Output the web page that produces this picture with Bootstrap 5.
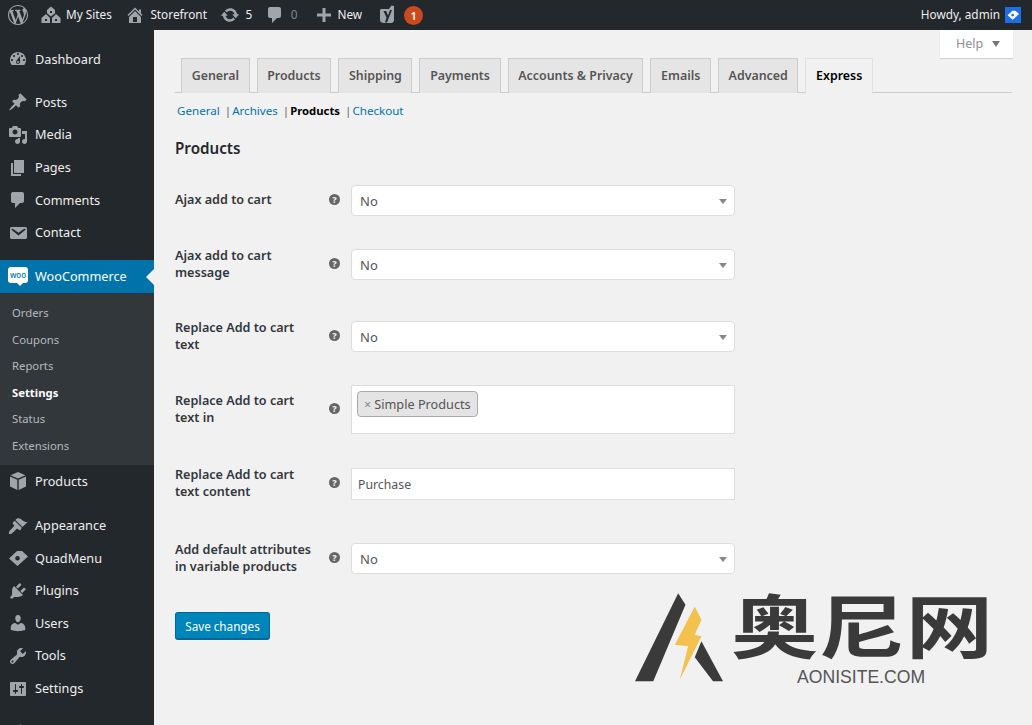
<!DOCTYPE html>
<html lang="en"><head><meta charset="utf-8"><title>Settings</title>
<link href="https://cdn.jsdelivr.net/npm/bootstrap@5.3.0/dist/css/bootstrap.min.css" rel="stylesheet">
<style>
html,body{height:725px;overflow:hidden;background:#f1f1f1}
body{font-family:"Noto Sans","Open Sans",sans-serif;font-size:13px;color:#444;position:relative}
svg{fill:currentColor;flex:none;display:block}
.wp-top{height:30px;background:#23282d;color:#eee;padding-left:8px;padding-right:11px;font-size:11.8px;white-space:nowrap}
.wp-top svg{color:#a0a5aa}
.top-it{margin-right:13px;gap:5.500px}
.t-site{gap:5px}
.t-cm{margin-right:17px}
.t-new{gap:3px;margin-right:15px}
.zero{color:#82878c}
.yo-badge{width:19px;height:19px;border-radius:50%;background:#ca4a1f;color:#fff;font-size:11px;font-weight:600;line-height:19px;text-align:center;margin-left:1.500px}
.ava{width:16px;height:16px;background:#1c6fe6;margin-left:5px;color:#fff}
.ava svg{color:#fff}
.wp-shell{height:695px}
.wp-side{width:154px;flex:none;background:#23282d;padding-top:13px;color:#eee;font-size:12.700px;overflow:hidden}
.side-it{height:32.600px;padding-left:8px;gap:7px;position:relative}
.side-it svg{color:#a0a5aa}
.sp{margin-top:10.500px}
.sp2{margin-top:11.500px}
.sp3{margin-top:11px}
.side-on{background:#0073aa;color:#fff}
.side-on::after{content:"";position:absolute;right:0;top:9px;border:8px solid transparent;border-right-color:#f1f1f1;border-left:0}
.wsub{background:#32373c;padding:7.500px 0 6px 12px;font-size:11.300px;color:#b4b9be}
.wsub div{height:26.500px;line-height:26.500px}
.wsub .cur{color:#fff;font-weight:700}
.woo-ico{width:20px;height:16px;background:#fff;border-radius:3px;color:#0073aa;font-size:8px;font-weight:500;line-height:15px;text-align:center;position:relative;margin-bottom:2px}
.woo-ico::after{content:"";position:absolute;left:9px;bottom:-3px;border:3px solid transparent;border-top-color:#fff;border-bottom:0}
.side-dot{width:14px;height:14px;border-radius:50%;background:#ca4a1f;margin-left:38px}
.wp-main{flex:1;position:relative;padding:28px 20px 0 21px;min-width:0}
.help-tab{position:absolute;top:0;right:19px;width:73px;height:28px;background:#fff;box-shadow:0 1px 1px rgba(0,0,0,.12);color:#8a9096;gap:9px;font-size:12.500px;padding-left:16px}
.help-tab i{border:4.500px solid transparent;border-top:6px solid #72777c;border-bottom:0;display:block}
.tab-line{border-bottom:1px solid #ccc;padding-left:6px;gap:7px;height:35px;margin-bottom:0!important;flex-wrap:nowrap}
.tab-line .nav-link{height:35px;padding:0 9.650px;border:1px solid #ccc;border-bottom:0;border-radius:0;background:#e5e5e5;color:#555;font-size:12.400px;font-weight:600;line-height:34px;margin:0;white-space:nowrap}
.tab-line .nav-link.active{background:#f1f1f1;color:#000;height:36px;margin-bottom:-1px}
.sub-line{font-size:11.600px;color:#666;margin:8.500px 0 0 2px;height:18.500px;line-height:17px;white-space:nowrap}
.sub-line a{color:#0073aa;text-decoration:none}
.sub-line b{color:#000;font-weight:700;font-size:11.300px}
.sub-line i{font-style:normal;margin:0 1px 0 5px}
.set-ttl{font-size:15.200px;font-weight:600;color:#23282d;margin:17px 0 26px;line-height:22px}
.fr{display:flex;align-items:center}
.fl{width:154px;flex:none;font-size:12.600px;font-weight:600;color:#32373c;line-height:17px;margin-top:-1px;margin-bottom:1px}
.qm{width:11px;height:11px;border-radius:50%;background:#666;color:#f1f1f1;font-size:9px;font-weight:800;line-height:11px;text-align:center;flex:none;margin:-3px 11px 0 0}
.fw{width:384px;flex:none}
.wp-sel{height:31px;border:1px solid #ddd;border-radius:4px;background-color:#fff;background-image:none;color:#555;font-size:13px;padding:1px 8px;position:relative;line-height:29px;box-shadow:none;appearance:none}
.sel-wrap{position:relative}
.sel-wrap::after{content:"";position:absolute;right:8px;top:14px;border:4px solid transparent;border-top:5px solid #888;border-bottom:0}
.multi{height:49px;border:1px solid #ddd;background:#fff;padding:5px 5px}
.chip{display:inline-block;height:26px;line-height:24px;background:#e4e4e4;border:1px solid #aaa;border-radius:4px;padding:0 6px;color:#555;font-size:12.700px}
.chip span{color:#888;margin-right:3px}
.txt{height:32px;border:1px solid #ddd;border-radius:0;background:#fff;color:#555;font-size:12.300px;padding:0 6px;box-shadow:none}
.m1{margin-bottom:31.500px}.m2{margin-bottom:38px}.m3{margin-bottom:31.500px}.m4{margin-bottom:33px}.m5{margin-bottom:40.500px}.m6{margin-bottom:36.500px}
.save{background:#0085ba;border:1px solid #006799;border-bottom-width:2px;color:#fff;font-size:11.700px;height:28px;width:95px;padding:0;border-radius:3px;line-height:26px}
.save:hover{background:#0085ba;color:#fff}
.mark-wm{position:absolute;left:635px;top:593px;display:flex;color:#3a3a3a;pointer-events:none}
.cn{font-family:"Noto Sans CJK SC",sans-serif;font-weight:700;font-size:84px;line-height:82px;height:67px;width:253px;white-space:nowrap;transform:scale(1.04,.82);transform-origin:0 0;margin-top:-3px}
.en{font-family:"Liberation Sans",sans-serif;font-size:17.600px;color:#555;line-height:18px;margin:11px 0 0 66px;white-space:nowrap}
</style></head>
<body>
<svg width="0" height="0" class="position-absolute">
<symbol id="i-wp" viewBox="0 0 20 20"><path d="M20 10c0-5.510-4.490-10-10-10C4.480 0 0 4.490 0 10c0 5.520 4.480 10 10 10 5.510 0 10-4.480 10-10zM7.780 15.370L4.370 6.220c.55-.02 1.170-.08 1.170-.08.5-.06.44-1.130-.06-1.110 0 0-1.450.11-2.370.11-.18 0-.37 0-.58-.01C4.120 2.690 6.870 1.110 10 1.110c2.330 0 4.450.87 6.050 2.340-.68-.11-1.650.39-1.650 1.580 0 .74.45 1.360.9 2.100.35.61.55 1.360.55 2.460 0 1.490-1.400 5-1.400 5l-3.030-8.370c.54-.02.82-.17.82-.17.5-.05.44-1.250-.06-1.220 0 0-1.440.12-2.380.12-.87 0-2.330-.12-2.330-.12-.5-.03-.56 1.200-.06 1.220l.92.08 1.260 3.410zM17.410 10c.24-.64.74-1.870.43-4.250.7 1.290 1.050 2.710 1.050 4.250 0 3.290-1.730 6.240-4.400 7.780.97-2.590 1.940-5.200 2.920-7.780zM6.100 18.090C3.120 16.650 1.110 13.530 1.110 10c0-1.300.23-2.480.72-3.590C3.250 10.300 4.670 14.200 6.100 18.090zm4.030-6.630l2.580 6.980c-.86.29-1.760.45-2.710.45-.79 0-1.570-.11-2.290-.33.81-2.380 1.620-4.740 2.420-7.100z"/></symbol>
<symbol id="i-sites" viewBox="0 0 20 20"><path d="M10 1.500L6 5v3.200l4 3.300 4-3.300V5zM9 6h2v2H9zM5 9L.5 13v5H9v-5zM4 14h2v2H4zM15 9l-4 4v5h8.500v-5zM14 14h2v2h-2z"/></symbol>
<symbol id="i-home" viewBox="0 0 20 20"><path d="M16 8.500l1.530 1.530-1.060 1.060L10 4.620l-6.470 6.470-1.060-1.060L10 2.500l4 4v-2h2v4zm-6-2.460l6 5.990V18H4v-5.970zM12 17v-5H8v5h4z"/></symbol>
<symbol id="i-upd" viewBox="0 0 20 20"><path d="M10.200 3.280c3.530 0 6.430 2.610 6.920 6h2.080l-3.500 4-3.500-4h2.320c-.45-1.970-2.210-3.450-4.320-3.450-1.450 0-2.730.71-3.540 1.780L4.950 5.660C6.230 4.200 8.110 3.280 10.200 3.280zm-.4 13.440c-3.520 0-6.430-2.610-6.920-6H.8l3.500-4c1.170 1.330 2.330 2.670 3.500 4H5.480c.45 1.970 2.210 3.450 4.320 3.450 1.450 0 2.730-.71 3.540-1.780l1.710 1.950c-1.280 1.460-3.150 2.380-5.250 2.380z"/></symbol>
<symbol id="i-cmt" viewBox="0 0 20 20"><path d="M5 2h9c1.100 0 2 .9 2 2v7c0 1.100-.9 2-2 2h-2l-5 5v-5H5c-1.100 0-2-.9-2-2V4c0-1.100.9-2 2-2z"/></symbol>
<symbol id="i-plus" viewBox="0 0 20 20"><path d="M17 8.500v3h-5.500V17h-3v-5.500H3v-3h5.500V3h3v5.500H17z"/></symbol>
<symbol id="i-yoast" viewBox="0 0 20 20"><path d="M4 4h8l2.500-3.500L17 1v14c0 1.500-1 3-3 3H7c-2 0-4-1-4-3V6c0-1 .4-2 1-2zM6.500 6l3 6.500-1.500 5 2 0 5-12.500-2 0-2 5.500-1.800-4.500z"/></symbol>
<symbol id="i-dash" viewBox="0 0 20 20"><path d="M3.760 16h12.480c1.100-1.370 1.760-3.110 1.760-5 0-4.420-3.580-8-8-8s-8 3.580-8 8c0 1.890.66 3.630 1.760 5zM10 4c.55 0 1 .45 1 1s-.45 1-1 1-1-.45-1-1 .45-1 1-1zM6 6c.55 0 1 .45 1 1s-.45 1-1 1-1-.45-1-1 .45-1 1-1zm8 0c.55 0 1 .45 1 1s-.45 1-1 1-1-.45-1-1 .45-1 1-1zm-5.370 5.550L12 7v6c0 1.100-.9 2-2 2s-2-.9-2-2c0-.57.24-1.080.63-1.450zM4 10c.55 0 1 .45 1 1s-.45 1-1 1-1-.45-1-1 .45-1 1-1zm12 0c.55 0 1 .45 1 1s-.45 1-1 1-1-.45-1-1 .45-1 1-1zm-5 3c0-.55-.45-1-1-1s-1 .45-1 1 .45 1 1 1 1-.45 1-1z"/></symbol>
<symbol id="i-post" viewBox="0 0 20 20"><path d="M10.440 3.020l1.820-1.820 6.360 6.350-1.830 1.820c-1.050-.68-2.480-.57-3.410.36l-.75.75c-.92.93-1.040 2.350-.35 3.410l-1.830 1.820-2.410-2.410-2.800 2.790c-.42.42-3.380 2.710-3.800 2.290s1.860-3.390 2.280-3.810l2.790-2.790L4.100 9.360l1.830-1.820c1.050.69 2.480.57 3.400-.36l.75-.75c.93-.92 1.050-2.350.36-3.410z"/></symbol>
<symbol id="i-media" viewBox="0 0 20 20"><path d="M13 11V4c0-.55-.45-1-1-1h-1.670L9 1H5L3.670 3H2c-.55 0-1 .45-1 1v7c0 .55.45 1 1 1h10c.55 0 1-.45 1-1zM7 4.500c1.380 0 2.500 1.120 2.500 2.500S8.380 9.500 7 9.500 4.500 8.380 4.500 7 5.620 4.500 7 4.500zM14 6h5v10.500c0 1.380-1.120 2.500-2.500 2.500S14 17.880 14 16.500s1.120-2.500 2.500-2.500c.17 0 .34.02.5.05V9h-3V6zm-4 8.050V13h2v3.500c0 1.380-1.120 2.500-2.500 2.500S7 17.880 7 16.500 8.120 14 9.500 14c.17 0 .34.02.5.05z"/></symbol>
<symbol id="i-page" viewBox="0 0 20 20"><path d="M6 15V2h10v13H6zm-1 1h8v2H3V5h2v11z"/></symbol>
<symbol id="i-mail" viewBox="0 0 20 20"><path d="M3.870 4h13.250C18.370 4 19 4.590 19 5.790v8.420c0 1.190-.63 1.790-1.880 1.790H3.870c-1.250 0-1.880-.6-1.880-1.790V5.790c0-1.200.63-1.790 1.880-1.790zm6.620 8.600l6.740-5.530c.24-.2.43-.66.13-1.070-.29-.41-.82-.42-1.170-.17l-5.700 3.860L4.800 5.830c-.35-.25-.88-.24-1.170.17-.3.41-.11.87.13 1.070z"/></symbol>
<symbol id="i-box" viewBox="0 0 20 20"><path d="M10 1l7.500 3.200L10 7.500 2.500 4.200zM2 5.500l7.300 3.200V19L2 15.500zM18 5.500v10L10.700 19V8.700z"/></symbol>
<symbol id="i-brush" viewBox="0 0 20 20"><path d="M14.480 11.060L7.410 3.990l1.500-1.500c.5-.56 2.300-.47 3.510.32 1.210.8 1.430 1.280 2.910 2.100 1.180.64 2.450 1.260 4.450.85zm-.71.71L6.700 4.700 4.930 6.470c-.39.39-.39 1.020 0 1.410l1.060 1.060c.39.39.39 1.030 0 1.420-.6.6-4.200 4.300-4.700 5.200-.5.900-.6 1.900-.2 2.300s1.400.3 2.300-.2c.9-.5 4.600-4.100 5.200-4.700.39-.39 1.030-.39 1.420 0l1.060 1.060c.39.39 1.020.39 1.410 0z"/></symbol>
<symbol id="i-quad" viewBox="0 0 20 20"><path d="M9 3l5 0 6 5.500L9.500 18 1 10.500zM9.500 8a2.300 2.300 0 1 0 .01 0z" fill-rule="evenodd"/></symbol>
<symbol id="i-plug" viewBox="0 0 20 20"><path d="M13.110 4.360L9.870 7.600 8 5.730l3.240-3.240c.35-.34 1.050-.2 1.560.32.52.51.66 1.210.31 1.550zm-8 1.770l.91-1.120 9.010 9.010-1.190.84c-.71.71-2.630 1.160-3.820 1.160H6.140L4.900 17.260c-.59.59-1.540.59-2.120 0-.59-.58-.59-1.530 0-2.120l1.240-1.240v-3.880c0-1.130.4-3.190 1.090-3.890zm7.260 3.970l3.240-3.240c.34-.35 1.040-.21 1.550.31.52.51.66 1.210.31 1.550l-3.240 3.250z"/></symbol>
<symbol id="i-user" viewBox="0 0 20 20"><path d="M10 9.250c-2.270 0-2.730-3.440-2.730-3.440C7 4.020 7.820 2 9.970 2c2.160 0 2.980 2.020 2.710 3.810 0 0-.41 3.440-2.680 3.440zm0 2.570L12.720 10c2.390 0 4.520 2.330 4.520 4.530v2.490s-3.650 1.130-7.240 1.130c-3.650 0-7.240-1.130-7.240-1.130v-2.490c0-2.250 1.940-4.480 4.470-4.480z"/></symbol>
<symbol id="i-tool" viewBox="0 0 20 20"><path d="M16.680 9.770c-1.340 1.340-3.300 1.670-4.950.99l-5.410 6.520c-.99.99-2.590.99-3.580 0s-.99-2.590 0-3.570l6.520-5.420c-.68-1.650-.35-3.610.99-4.950 1.280-1.280 3.120-1.620 4.720-1.060l-2.890 2.890 2.820 2.820 2.860-2.870c.53 1.580.18 3.390-1.080 4.650zM3.810 16.210c.4.39 1.040.39 1.430 0 .4-.4.4-1.040 0-1.430-.39-.4-1.030-.4-1.430 0-.39.39-.39 1.030 0 1.430z"/></symbol>
<symbol id="i-set" viewBox="0 0 20 20"><path d="M18 16V4c0-.55-.45-1-1-1H3c-.55 0-1 .45-1 1v12c0 .55.45 1 1 1h14c.55 0 1-.45 1-1zM8 11h1c.55 0 1 .45 1 1s-.45 1-1 1H8v1.500c0 .28-.22.5-.5.5s-.5-.22-.5-.5V13H6c-.55 0-1-.45-1-1s.45-1 1-1h1V5.500c0-.28.22-.5.5-.5s.5.22.5.5V11zm5-2h-1c-.55 0-1-.45-1-1s.45-1 1-1h1V5.500c0-.28.22-.5.5-.5s.5.22.5.5V7h1c.55 0 1 .45 1 1s-.45 1-1 1h-1v5.500c0 .28-.22.5-.5.5s-.5-.22-.5-.5V9z"/></symbol>
</svg>

<header class="wp-top d-flex align-items-center">
  <div class="top-it d-flex align-items-center"><svg width="20" height="20"><use href="#i-wp"/></svg></div>
  <div class="top-it t-site d-flex align-items-center"><svg width="20" height="20"><use href="#i-sites"/></svg><span>My Sites</span></div>
  <div class="top-it d-flex align-items-center"><svg width="20" height="20"><use href="#i-home"/></svg><span>Storefront</span></div>
  <div class="top-it d-flex align-items-center"><svg width="20" height="20"><use href="#i-upd"/></svg><span>5</span></div>
  <div class="top-it t-cm d-flex align-items-center"><svg width="20" height="20"><use href="#i-cmt"/></svg><span class="zero">0</span></div>
  <div class="top-it t-new d-flex align-items-center"><svg width="20" height="20"><use href="#i-plus"/></svg><span>New</span></div>
  <div class="top-it d-flex align-items-center"><svg width="20" height="20"><use href="#i-yoast"/></svg><div class="yo-badge">1</div></div>
  <div class="ms-auto d-flex align-items-center"><span>Howdy, admin</span><div class="ava d-flex align-items-center justify-content-center"><svg width="12" height="12"><use href="#i-quad"/></svg></div></div>
</header>

<div class="wp-shell d-flex">
  <nav class="wp-side">
    <div class="side-it d-flex align-items-center"><svg width="20" height="20"><use href="#i-dash"/></svg>Dashboard</div>
    <div class="side-it sp d-flex align-items-center"><svg width="20" height="20"><use href="#i-post"/></svg>Posts</div>
    <div class="side-it d-flex align-items-center"><svg width="20" height="20"><use href="#i-media"/></svg>Media</div>
    <div class="side-it d-flex align-items-center"><svg width="20" height="20"><use href="#i-page"/></svg>Pages</div>
    <div class="side-it d-flex align-items-center"><svg width="20" height="20"><use href="#i-cmt"/></svg>Comments</div>
    <div class="side-it d-flex align-items-center"><svg width="20" height="20"><use href="#i-mail"/></svg>Contact</div>
    <div class="side-it side-on sp3 d-flex align-items-center"><div class="woo-ico">woo</div>WooCommerce</div>
    <div class="wsub"><div>Orders</div><div>Coupons</div><div>Reports</div><div class="cur">Settings</div><div>Status</div><div>Extensions</div></div>
    <div class="side-it d-flex align-items-center"><svg width="20" height="20"><use href="#i-box"/></svg>Products</div>
    <div class="side-it sp2 d-flex align-items-center"><svg width="20" height="20"><use href="#i-brush"/></svg>Appearance</div>
    <div class="side-it d-flex align-items-center"><svg width="20" height="20"><use href="#i-quad"/></svg>QuadMenu</div>
    <div class="side-it d-flex align-items-center"><svg width="20" height="20"><use href="#i-plug"/></svg>Plugins</div>
    <div class="side-it d-flex align-items-center"><svg width="20" height="20"><use href="#i-user"/></svg>Users</div>
    <div class="side-it d-flex align-items-center"><svg width="20" height="20"><use href="#i-tool"/></svg>Tools</div>
    <div class="side-it d-flex align-items-center"><svg width="20" height="20"><use href="#i-set"/></svg>Settings</div>
    <div class="side-it sp2 d-flex align-items-center"><svg width="20" height="20"><use href="#i-post"/></svg><div class="side-dot"></div></div>
  </nav>
  <main class="wp-main">
    <div class="help-tab d-flex align-items-center"><span>Help</span><i></i></div>
    <ul class="nav nav-tabs tab-line">
      <li class="nav-item"><a class="nav-link" href="#">General</a></li>
      <li class="nav-item"><a class="nav-link" href="#">Products</a></li>
      <li class="nav-item"><a class="nav-link" href="#">Shipping</a></li>
      <li class="nav-item"><a class="nav-link" href="#">Payments</a></li>
      <li class="nav-item"><a class="nav-link" href="#">Accounts &amp; Privacy</a></li>
      <li class="nav-item"><a class="nav-link" href="#">Emails</a></li>
      <li class="nav-item"><a class="nav-link" href="#">Advanced</a></li>
      <li class="nav-item"><a class="nav-link active" href="#">Express</a></li>
    </ul>
    <div class="sub-line"><a href="#">General</a><i>|</i><a href="#">Archives</a><i>|</i><b>Products</b><i>|</i><a href="#">Checkout</a></div>
    <h2 class="set-ttl">Products</h2>
    <div class="fr m1"><div class="fl">Ajax add to cart</div><div class="qm">?</div><div class="fw sel-wrap"><select class="form-select wp-sel"><option>No</option></select></div></div>
    <div class="fr m2"><div class="fl">Ajax add to cart<br>message</div><div class="qm">?</div><div class="fw sel-wrap"><select class="form-select wp-sel"><option>No</option></select></div></div>
    <div class="fr m3"><div class="fl">Replace Add to cart<br>text</div><div class="qm">?</div><div class="fw sel-wrap"><select class="form-select wp-sel"><option>No</option></select></div></div>
    <div class="fr m4"><div class="fl">Replace Add to cart<br>text in</div><div class="qm">?</div><div class="fw multi"><span class="chip"><span>×</span>Simple Products</span></div></div>
    <div class="fr m5"><div class="fl">Replace Add to cart<br>text content</div><div class="qm">?</div><div class="fw"><input class="form-control txt" value="Purchase"></div></div>
    <div class="fr m6"><div class="fl">Add default attributes<br>in variable products</div><div class="qm">?</div><div class="fw sel-wrap"><select class="form-select wp-sel"><option>No</option></select></div></div>
    <button class="btn btn-primary save" type="button">Save changes</button>
  </main>
</div>

<div class="mark-wm">
  <svg width="88" height="90" viewBox="45 70 265 270"><path d="M175 70l22 35L100 335H45z"/><path fill="#f2c14e" d="M225 110l20 40-20 45 20 5-65 130 25-100-40-5z"/><path d="M245 215l65 120h-30l-55-72z"/></svg>
  <div class="ms-2"><div class="cn">奥尼网</div><div class="en">AONISITE.COM</div></div>
</div>
<script src="https://cdn.jsdelivr.net/npm/bootstrap@5.3.0/dist/js/bootstrap.bundle.min.js"></script>
</body></html>
